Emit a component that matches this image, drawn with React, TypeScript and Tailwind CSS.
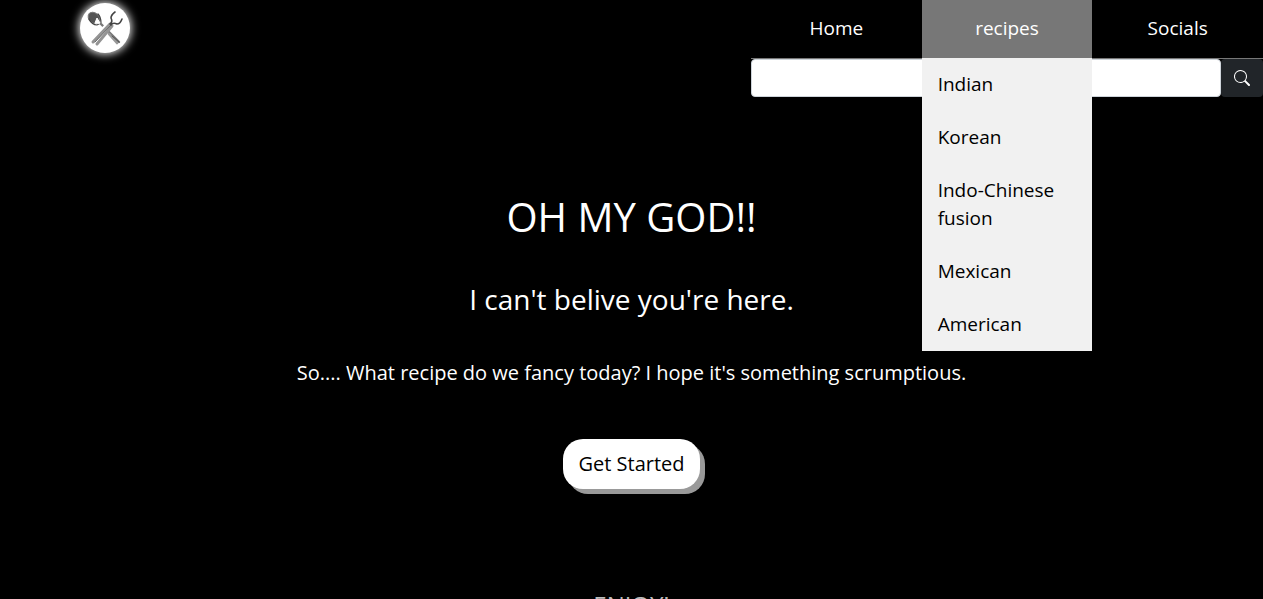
const cuisines = ["Indian", "Korean", "Indo-Chinese fusion", "Mexican", "American"];

function Logo() {
  return (
    <svg viewBox="0 0 50 50" className="size-full" aria-hidden="true" fill="none" strokeLinecap="round">
      <ellipse cx="14" cy="15" rx="5" ry="6.5" transform="rotate(-48 14 15)" fill="#555" stroke="#777" />
      <path d="M9 16q3 6 8 6l4-2q0-6-3-9" stroke="#444" strokeWidth="1.2" />
      <path d="M15 20l2-5 3 5z" fill="#fff" stroke="#fff" />
      <path d="M21 21l18 18" stroke="#777" strokeWidth="2.4" />
      <path d="M29 31l8 9" stroke="#999" strokeWidth="2.6" />
      <path d="M32 33l7 6" stroke="#555" strokeWidth="1" />
      <path d="M13 39l19-20" stroke="#fff" strokeWidth="7" strokeLinecap="butt" />
      <path d="M13 39l17-18M17 41l15-18" stroke="#949494" strokeWidth="3" />
      <path d="M15 39l16-17" stroke="#666" strokeWidth="1" />
      <path d="M30 21q3-2 1-6q0-3 4-6M31 22q2-3 6-1q3 0 5-5" stroke="#444" strokeWidth="1.6" />
    </svg>
  );
}

export default function App() {
  const navLink = "block pt-[15px] pb-[17px] text-center text-[19px]/[26px] text-white hover:bg-[#777]";
  return (
    <div className="min-h-screen overflow-hidden bg-black font-['Open_Sans',sans-serif] text-white">
      <header className="flex justify-between">
        <a
          href="#home"
          aria-label="Recipe home"
          className="mt-[3px] ml-20 size-[50px] rounded-full bg-white shadow-[0_0_10px_1px_#fff]"
        >
          <Logo />
        </a>
        <div className="w-[512px]">
          <nav className="grid grid-cols-3 border-b border-[#777]">
            <a href="#home" className={navLink}>Home</a>
            <div className="relative">
              <a href="#recipes" className="block bg-[#777] pt-[15px] pb-[17px] text-center text-[19px]/[26px] text-white">
                recipes
              </a>
              <ul className="absolute top-full left-0 z-10 w-full bg-[#f1f1f1]">
                {cuisines.map((name) => (
                  <li key={name}>
                    <a href="#recipes" className="block px-4 pt-3 pb-[13px] text-[19px]/7 text-black">
                      {name}
                    </a>
                  </li>
                ))}
              </ul>
            </div>
            <a href="#socials" className={navLink}>Socials</a>
          </nav>
          <form className="flex" role="search">
            <input
              type="search"
              aria-label="Search recipes"
              className="h-[38px] min-w-0 flex-1 rounded-sm border border-[#ced4da] bg-white px-3 text-black"
            />
            <button
              type="submit"
              aria-label="Search"
              className="flex w-[42px] items-center justify-center rounded-sm bg-[#212529]"
            >
              <svg viewBox="0 0 16 16" className="size-4" fill="#fff" aria-hidden="true">
                <path d="M11.742 10.344a6.5 6.5 0 1 0-1.397 1.398h-.001q.044.06.098.115l3.85 3.85a1 1 0 0 0 1.415-1.414l-3.85-3.85a1 1 0 0 0-.115-.1zM12 6.5a5.5 5.5 0 1 1-11 0 5.5 5.5 0 0 1 11 0" />
              </svg>
            </button>
          </form>
        </div>
      </header>
      <main className="flex flex-col items-center px-4 pt-24 text-center">
        <h1 className="text-[40px]/[48px]">OH MY GOD!!</h1>
        <h2 className="mt-10 text-[28px]/[36px]">I can't belive you're here.</h2>
        <p className="mt-[42px] text-[20px]/[28px]">
          So.... What recipe do we fancy today? I hope it's something scrumptious.
        </p>
        <button
          type="button"
          className="mt-13 h-[50px] rounded-[20px] bg-white px-[15px] text-[20px] font-medium text-black shadow-[5px_5px_0_#999]"
        >
          Get Started
        </button>
        <p className="mt-25 text-[24px]/[32px] text-[#bbb]">ENJOY!</p>
      </main>
    </div>
  );
}
